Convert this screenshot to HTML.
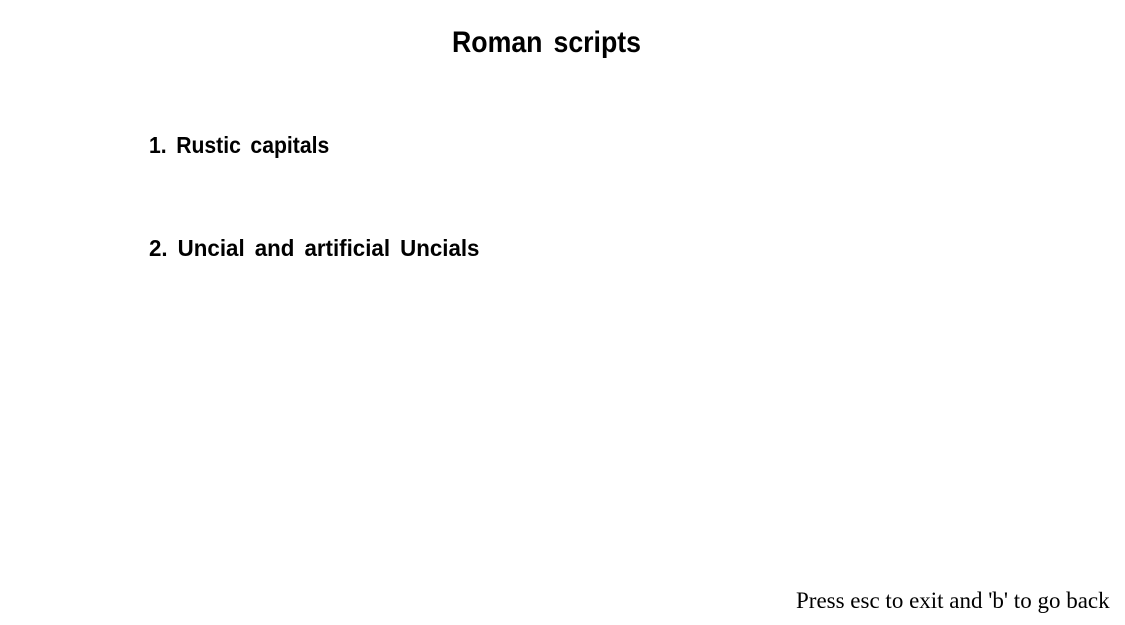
<!DOCTYPE html>
<html><head><meta charset="utf-8"><style>
html,body{margin:0;padding:0;background:#fff;width:1125px;height:625px;overflow:hidden;position:relative}
.t{position:absolute;font-family:"Liberation Sans",sans-serif;font-weight:bold;color:#000;white-space:nowrap;transform-origin:left top}
#title{left:452px;top:26px;font-size:30px;transform:scaleX(0.89);word-spacing:4px}
#i1{left:149px;top:132px;font-size:23px;transform:scaleX(0.92);word-spacing:4px}
#i2{left:149px;top:235px;font-size:23px;transform:scaleX(0.97);word-spacing:4px}
#foot{position:absolute;left:796px;top:588px;font-family:"Liberation Serif",serif;font-size:23px;white-space:nowrap}
</style></head><body>
<div class="t" id="title">Roman scripts</div>
<div class="t" id="i1">1. Rustic capitals</div>
<div class="t" id="i2">2. Uncial and artificial Uncials</div>
<div id="foot">Press esc to exit and 'b' to go back</div>
</body></html>
